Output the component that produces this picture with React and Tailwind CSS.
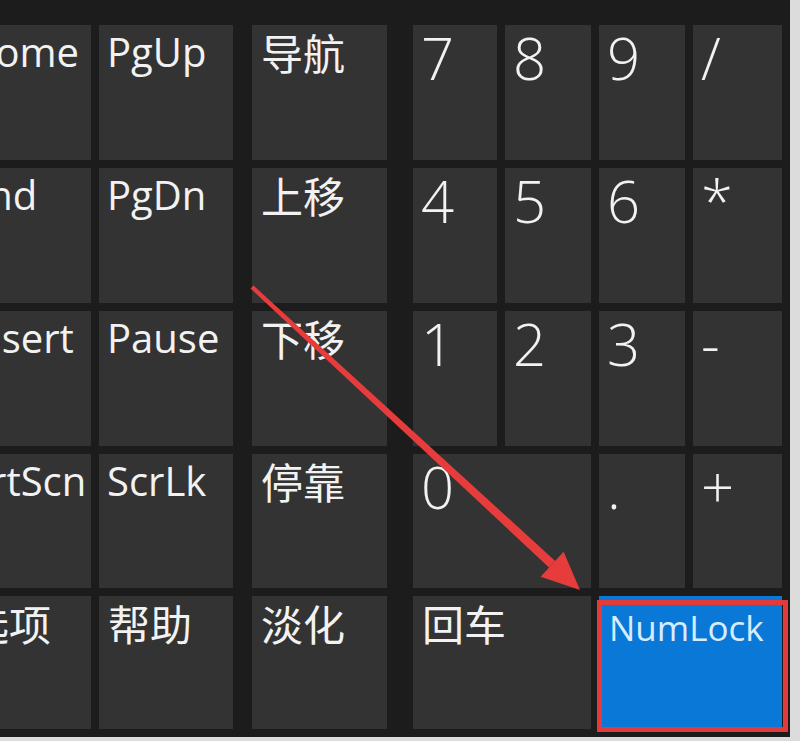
import React from "react";

const LAT = "font-['Open_Sans','Noto_Sans_CJK_SC',sans-serif]";
const CJK = "font-['Noto_Sans_CJK_SC','Noto_Sans',sans-serif]";

function Key({ label, kind = "lat", className = "" }) {
  let txt = "";
  if (kind === "lat") txt = `${LAT} text-[40px] leading-none pl-[8px] pt-[7px]`;
  if (kind === "cjk") txt = `${CJK} text-[42px] leading-none pl-[9px] pt-[6px]`;
  if (kind === "num") txt = `${LAT} font-light text-[58px] leading-none pl-[8px] pt-[4px]`;
  return (
    <div className={`bg-[#333333] text-[#f2f2f2] whitespace-nowrap ${txt} ${className}`}>
      {label}
    </div>
  );
}

export default function App() {
  return (
    <div className="relative w-[800px] h-[741px] bg-[#dcdcdc] overflow-hidden">
      <div className="w-[790px] h-[737px] bg-[#1c1c1c] overflow-hidden">
        <div className="flex pt-[25px] ml-[-42px]">
          <div className="grid grid-cols-[133px_134px] grid-rows-[135px_135px_135px_134px_133px] gap-x-[8px] gap-y-[8px] shrink-0">
            <Key label="Home" />
            <Key label="PgUp" />
            <Key label="End" />
            <Key label="PgDn" />
            <Key label="Insert" />
            <Key label="Pause" />
            <Key label="PrtScn" />
            <Key label="ScrLk" />
            <Key label="选项" kind="cjk" />
            <Key label="帮助" kind="cjk" />
          </div>
          <div className="ml-[19px] grid grid-cols-[135px] grid-rows-[135px_135px_135px_134px_133px] gap-y-[8px] shrink-0">
            <Key label="导航" kind="cjk" />
            <Key label="上移" kind="cjk" />
            <Key label="下移" kind="cjk" />
            <Key label="停靠" kind="cjk" />
            <Key label="淡化" kind="cjk" />
          </div>
          <div className="ml-[26px] grid grid-cols-[84px_86px_86px_89px] grid-rows-[135px_135px_135px_134px_133px] gap-x-[8px] gap-y-[8px] shrink-0">
            <Key label="7" kind="num" />
            <Key label="8" kind="num" />
            <Key label="9" kind="num" />
            <Key label="/" kind="num" />
            <Key label="4" kind="num" />
            <Key label="5" kind="num" />
            <Key label="6" kind="num" />
            <Key label="*" kind="num" />
            <Key label="1" kind="num" />
            <Key label="2" kind="num" />
            <Key label="3" kind="num" />
            <Key label="-" kind="num" />
            <Key label="0" kind="num" className="col-span-2" />
            <Key label="." kind="num" />
            <Key label="+" kind="num" />
            <Key label="回车" kind="cjk" className="col-span-2" />
            <div className={`col-span-2 bg-[#0a78d7] text-[#d6ecff] ${LAT} text-[35px] leading-none pl-[10px] pt-[14px] whitespace-nowrap`}>
              NumLock
            </div>
          </div>
        </div>
      </div>

      <svg
        className="absolute left-0 top-0 pointer-events-none"
        width="800"
        height="741"
        viewBox="0 0 800 741"
      >
        <polygon
          points="253.4,285.5 250.6,288.5 549,567.5 555.2,560.9"
          fill="#e63c3c"
        />
        <polygon points="580,590 540.6,576.7 563.6,551.7" fill="#e63c3c" />
      </svg>

      <div className="absolute left-[597px] top-[600px] w-[191px] h-[132px] border-[5px] border-[#e23b3b]" />
    </div>
  );
}
